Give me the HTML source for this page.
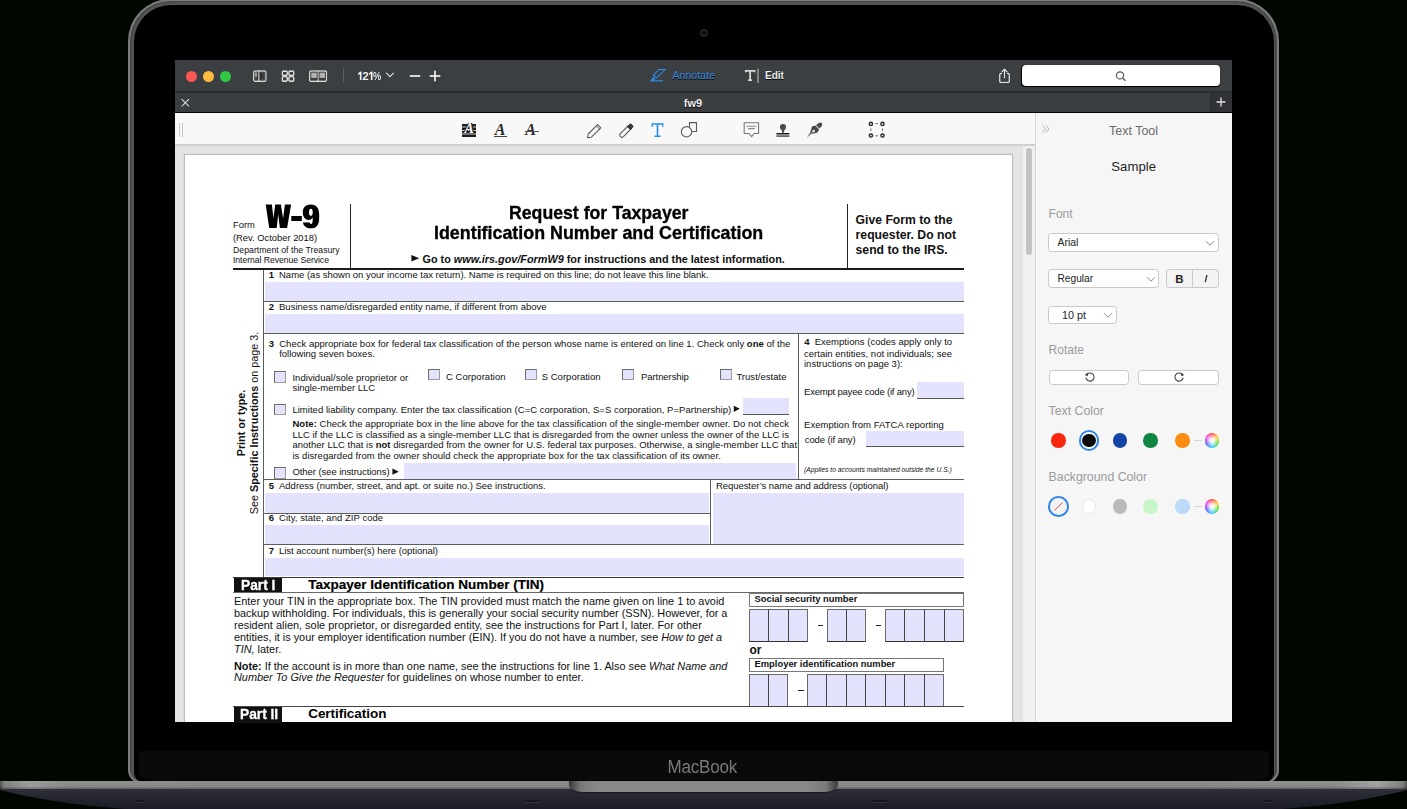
<!DOCTYPE html>
<html><head><meta charset="utf-8"><style>
*{margin:0;padding:0;box-sizing:border-box}
html,body{width:1407px;height:809px;overflow:hidden;background:#000700;font-family:"Liberation Sans",sans-serif}
.t{position:absolute;line-height:1;white-space:nowrap}
.r{position:absolute}
svg{position:absolute;overflow:visible}
</style></head><body>
<div class="r" style="left:128px;top:-1px;width:1151px;height:784px;border-radius:42px 42px 13px 13px;background:#7c7c7c"></div>
<div class="r" style="left:130.2px;top:1.2px;width:1146.6px;height:780px;border-radius:40px 40px 11px 11px;background:#4a4a4a"></div>
<div class="r" style="left:131.6px;top:2.6px;width:1143.8px;height:779px;border-radius:38.5px 38.5px 10px 10px;background:#545454"></div>
<div class="r" style="left:133.5px;top:4.5px;width:1140px;height:777px;border-radius:37px 37px 9px 9px;background:#000"></div>
<div class="r" style="left:699.5px;top:28.5px;width:8px;height:8px;border-radius:50%;background:radial-gradient(circle at 50% 50%,#050505 0,#111 30%,#2a2a2a 60%,#000 100%)"></div>
<div class="r" style="left:139px;top:751px;width:1130px;height:29px;background:#0a0a0a;border-radius:0 0 9px 9px;"></div>
<div class="t" style="left:667.50px;top:759.00px;font-size:17px;color:#7a7a7a;transform:scaleY(1.1);transform-origin:0 85%;letter-spacing:-0.2px;">MacBook</div>
<div class="r" style="left:0;top:781px;width:1407px;height:9px;background:linear-gradient(180deg,rgba(255,255,255,.06),rgba(0,0,0,0) 60%,rgba(0,0,0,.4)),linear-gradient(90deg,#4a4a4a 0,#7d7d7d 4px,#9a9a9a 30px,#8a8a8a 60px,#868686 200px,#868686 1207px,#8a8a8a 1340px,#a0a0a0 1377px,#7d7d7d 1403px,#4a4a4a 1407px)"></div>
<svg style="left:0;top:789px" width="1407" height="20" viewBox="0 0 1407 20"><defs><linearGradient id="bg1" x1="0" y1="0" x2="0" y2="1"><stop offset="0" stop-color="#2e2f37"/><stop offset="1" stop-color="#1a1b26"/></linearGradient></defs><path d="M0 0 H1407 V1 Q1352 15 1282 20 H125 Q55 15 0 1 Z" fill="url(#bg1)"/></svg>
<div class="r" style="left:134px;top:800px;width:12px;height:2px;border-radius:50%;background:#15161d;box-shadow:0 1px 0 rgba(120,120,140,.25)"></div>
<div class="r" style="left:524px;top:800px;width:18px;height:2px;border-radius:50%;background:#15161d;box-shadow:0 1px 0 rgba(120,120,140,.25)"></div>
<div class="r" style="left:870px;top:800px;width:18px;height:2px;border-radius:50%;background:#15161d;box-shadow:0 1px 0 rgba(120,120,140,.25)"></div>
<div class="r" style="left:1262px;top:800px;width:12px;height:2px;border-radius:50%;background:#15161d;box-shadow:0 1px 0 rgba(120,120,140,.25)"></div>
<div class="r" style="left:569px;top:781px;width:269px;height:11px;border-radius:0 0 14px 14px/0 0 8px 8px;background:linear-gradient(90deg,#3a3a3a,#7a7a7a 12px,#888 30px,#888 239px,#7a7a7a 257px,#3a3a3a);box-shadow:0 1px 1px rgba(0,0,0,.4)"></div>
<div class="r" style="left:175px;top:59.5px;width:1057px;height:662.5px;background:#e4e4e4;"></div>
<div class="r" style="left:175px;top:59.5px;width:1057px;height:31.5px;background:#3c3f42;"></div>
<div class="r" style="left:175px;top:91px;width:1057px;height:1.6px;background:#2b2d30;"></div>
<div class="r" style="left:175px;top:92.6px;width:1057px;height:19.4px;background:#3b3e41;"></div>
<div class="r" style="left:1211px;top:92.6px;width:21px;height:19.4px;background:#313336;"></div>
<div class="r" style="left:1210px;top:92.6px;width:1px;height:19.4px;background:#2c2e31;"></div>
<div class="r" style="left:175px;top:112px;width:1057px;height:1px;background:#050505;"></div>
<div class="r" style="left:185.5px;top:70.8px;width:11px;height:11px;border-radius:50%;background:#fc5753"></div>
<div class="r" style="left:202.5px;top:70.8px;width:11px;height:11px;border-radius:50%;background:#fdbc40"></div>
<div class="r" style="left:220.0px;top:70.8px;width:11px;height:11px;border-radius:50%;background:#33c748"></div>
<svg style="left:252px;top:69px;filter:drop-shadow(0 0.6px 0.3px #000) drop-shadow(0 0 0.5px #000);" width="16" height="14" viewBox="0 0 16 14"><rect x="1.75" y="1.95" width="12.2" height="10.3" rx="1.2" fill="none" stroke="#d9d9d6" stroke-width="1.4"/><line x1="6.9" y1="2" x2="6.9" y2="12" stroke="#d9d9d6" stroke-width="1.3"/><rect x="3" y="3.2" width="2.2" height="5" fill="#9a9a98"/><rect x="9" y="3.6" width="3.4" height="7" fill="none" stroke="#5e5e5c" stroke-width="0.8"/></svg>
<svg style="left:281px;top:69px;filter:drop-shadow(0 0.6px 0.3px #000) drop-shadow(0 0 0.5px #000);" width="15" height="14" viewBox="0 0 15 14"><rect x="1.3" y="2.1" width="4.9" height="4.3" rx="0.9" fill="none" stroke="#d9d9d6" stroke-width="1.6"/><rect x="1.3" y="7.8" width="4.9" height="4.3" rx="0.9" fill="none" stroke="#d9d9d6" stroke-width="1.6"/><rect x="7.9" y="2.1" width="4.9" height="4.3" rx="0.9" fill="none" stroke="#d9d9d6" stroke-width="1.6"/><rect x="7.9" y="7.8" width="4.9" height="4.3" rx="0.9" fill="none" stroke="#d9d9d6" stroke-width="1.6"/></svg>
<svg style="left:308px;top:69px;filter:drop-shadow(0 0.6px 0.3px #000) drop-shadow(0 0 0.5px #000);" width="20" height="14" viewBox="0 0 20 14"><rect x="1.7" y="1.95" width="16.8" height="10.3" rx="1" fill="none" stroke="#d9d9d6" stroke-width="1.4"/><line x1="10.1" y1="2" x2="10.1" y2="12" stroke="#d9d9d6" stroke-width="1.2"/><rect x="3.2" y="3.4" width="5.6" height="5.8" fill="#a8a8a6"/><rect x="11.4" y="3.4" width="5.6" height="5.8" fill="#a8a8a6"/><path d="M3.2 5.3 H8.8 M3.2 7.3 H8.8 M11.4 5.3 H17 M11.4 7.3 H17" stroke="#c8c8c6" stroke-width="0.6"/></svg>
<div class="r" style="left:343px;top:68px;width:1px;height:15px;background:#5b5e61;"></div>
<svg style="left:357px;top:71px;filter:drop-shadow(0 0 0.6px #000)" width="17" height="10" viewBox="0 0 17 10"><path d="M1.0 2.4 L3.0 0.4 H4.6 V8.9 H2.8 V2.9 L1.0 4.1 Z M12.0 2.4 L14.0 0.4 H15.6 V8.9 H13.8 V2.9 L12.0 4.1 Z" fill="#f4f4f4"/></svg>
<div class="t" style="left:362.30px;top:71.00px;font-size:11.5px;font-weight:700;color:#f4f4f4;text-shadow:0 0 1px #000;">2</div>
<div class="t" style="left:373.40px;top:71.00px;font-size:11.5px;font-weight:700;color:#f4f4f4;text-shadow:0 0 1px #000;transform:scaleX(0.81);transform-origin:0 0;">%</div>
<svg style="left:385px;top:71px;filter:drop-shadow(0 0.6px 0.3px #000) drop-shadow(0 0 0.5px #000);" width="10" height="8" viewBox="0 0 10 8"><polyline points="1.2,1.8 5,5.8 8.8,1.8" fill="none" stroke="#d9d9d6" stroke-width="1.3"/></svg>
<svg style="left:408px;top:69px;filter:drop-shadow(0 0.6px 0.3px #000) drop-shadow(0 0 0.5px #000);" width="34" height="14" viewBox="0 0 34 14"><line x1="1.6" y1="7" x2="12.4" y2="7" stroke="#f0f0f0" stroke-width="1.8"/><line x1="21.5" y1="7" x2="32.5" y2="7" stroke="#f0f0f0" stroke-width="1.8"/><line x1="27" y1="1.6" x2="27" y2="12.4" stroke="#f0f0f0" stroke-width="1.8"/></svg>
<svg style="left:645px;top:64px;filter:drop-shadow(0 0.5px 0.4px #000)" width="24" height="22" viewBox="0 0 24 22"><path d="M14.1 5.4 H20.4 L11.6 13.9 L8.4 11.2 Z" fill="none" stroke="#3b8ee0" stroke-width="1.3" stroke-linejoin="round"/><path d="M5.2 17.6 L8.1 12.6 L10.6 15.3 Z" fill="#3b8ee0"/><path d="M5.2 16.9 H18" stroke="#3b8ee0" stroke-width="1.5"/></svg>
<div class="t" style="left:672.40px;top:70.00px;font-size:10.5px;color:#3b8ee0;letter-spacing:0.1px;text-shadow:0 0.6px 0.5px #000;">Annotate</div>
<svg style="left:743px;top:67px;filter:drop-shadow(0 0.6px 0.3px #000) drop-shadow(0 0 0.5px #000);" width="18" height="17" viewBox="0 0 18 17"><path d="M2.6 5.6 V3.9 H11.6 V5.6 M7.1 3.9 V13.2 M5.1 13.2 H9.1" fill="none" stroke="#dcdcd8" stroke-width="1.8"/><line x1="15" y1="1.5" x2="15" y2="16" stroke="#dcdcd8" stroke-width="1.2"/></svg>
<div class="t" style="left:765.00px;top:71.00px;font-size:10px;font-weight:700;color:#ededed;text-shadow:0 0.7px 0.6px #000;">Edit</div>
<svg style="left:997px;top:67px;filter:drop-shadow(0 0.6px 0.3px #000) drop-shadow(0 0 0.5px #000);" width="15" height="18" viewBox="0 0 15 18"><path d="M5 6.5 H3.6 Q2.8 6.5 2.8 7.3 V14.6 Q2.8 15.4 3.6 15.4 H11.4 Q12.2 15.4 12.2 14.6 V7.3 Q12.2 6.5 11.4 6.5 H10" fill="none" stroke="#e6e6e6" stroke-width="1.4"/><line x1="7.5" y1="2.5" x2="7.5" y2="11.5" stroke="#e6e6e6" stroke-width="1.3"/><polyline points="4.6,5.2 7.5,2.2 10.4,5.2" fill="none" stroke="#e6e6e6" stroke-width="1.3"/></svg>
<div class="r" style="left:1022px;top:65px;width:198px;height:21px;border-radius:4px;background:#fff;box-shadow:-0.5px 0.8px 0.8px #000"></div>
<svg style="left:1114px;top:69px" width="14" height="14" viewBox="0 0 14 14"><circle cx="6" cy="6.4" r="3.6" fill="none" stroke="#555" stroke-width="1.2"/><line x1="8.6" y1="9" x2="11.4" y2="11.8" stroke="#555" stroke-width="1.3"/></svg>
<svg style="left:179px;top:97px;filter:drop-shadow(0 0.6px 0.3px #000) drop-shadow(0 0 0.5px #000);" width="13" height="12" viewBox="0 0 13 12"><path d="M2.5 2 L10.2 9.5 M10.2 2 L2.5 9.5" stroke="#cdcdcd" stroke-width="1.3"/></svg>
<div class="t" style="left:683.80px;top:98.00px;font-size:11px;font-weight:700;color:#f0f0f0;text-shadow:0 0.6px 0.7px #000;">fw9</div>
<svg style="left:1214px;top:95px" width="14" height="14" viewBox="0 0 14 14"><path d="M7 2.5 V11.5 M2.5 7 H11.5" stroke="#e0e0e0" stroke-width="1.3"/></svg>
<div class="r" style="left:175px;top:113px;width:860px;height:32px;background:#f8f8f8;"></div>
<div class="r" style="left:175px;top:144.4px;width:860px;height:1.4px;background:#d0d0d0;"></div>
<div class="r" style="left:179px;top:123px;width:1px;height:14px;background:#c8c8c8;"></div>
<div class="r" style="left:181.5px;top:123px;width:1px;height:14px;background:#c8c8c8;"></div>
<div class="r" style="left:462px;top:123.5px;width:13.5px;height:13px;background:#1e1e1e"></div>
<svg style="left:462px;top:123.5px" width="14" height="13" viewBox="0 0 14 13"><path d="M0 3.0 H14 M0 6.5 H14 M0 10 H14" stroke="#f8f8f8" stroke-width="0.8"/></svg>
<div class="t" style="left:464.60px;top:122.00px;font-size:14px;font-weight:700;color:#f8f8f8;font-family:'Liberation Serif',serif;font-style:italic;text-shadow:0.7px 0 0 #1e1e1e,-0.7px 0 0 #1e1e1e,1.2px 0 0 #1e1e1e,-1.2px 0 0 #1e1e1e;">A</div>
<div class="t" style="left:494.80px;top:122.00px;font-size:16px;font-weight:700;color:#2a2a2a;font-family:'Liberation Serif',serif;font-style:italic;">A</div>
<div class="r" style="left:494px;top:136.2px;width:12.5px;height:1.1px;background:#444;"></div>
<div class="t" style="left:525.20px;top:122.00px;font-size:16px;font-weight:700;color:#2a2a2a;font-family:'Liberation Serif',serif;font-style:italic;">A</div>
<div class="r" style="left:524.8px;top:131.3px;width:14px;height:1.1px;background:#555;"></div>
<svg style="left:585px;top:121px" width="19" height="18" viewBox="0 0 19 18"><path d="M3.2 13 L12.6 3.6 L15.8 6.8 L6.4 16.2 L2.6 16.6 Z" fill="none" stroke="#5a5a5a" stroke-width="1.1" stroke-linejoin="round"/><line x1="11.4" y1="4.8" x2="14.6" y2="8" stroke="#5a5a5a" stroke-width="1"/></svg>
<svg style="left:617px;top:121px" width="18" height="18" viewBox="0 0 18 18"><path d="M3.4 12.6 L11 5 L14 8 L6.4 15.6 Q5 17 3.6 15.6 L3.4 15.4 Q2 14 3.4 12.6 Z" fill="none" stroke="#5a5a5a" stroke-width="1.1"/><path d="M10.4 5.6 L12.2 3.8 Q13.6 2.4 15 3.8 L15.2 4 Q16.6 5.4 15.2 6.8 L13.4 8.6 Z" fill="#3a3a3a" stroke="#2a2a2a" stroke-width="1"/></svg>
<svg style="left:650px;top:122px" width="15" height="16" viewBox="0 0 15 16"><path d="M1.8 2 H13.2 M7.5 2 V14 M4.4 14.3 H10.6" fill="none" stroke="#1f8ef3" stroke-width="1.6"/><path d="M2.2 1.4 V5 M12.8 1.4 V5" stroke="#1f8ef3" stroke-width="1.2"/></svg>
<svg style="left:680px;top:121px" width="18" height="18" viewBox="0 0 18 18"><path d="M9.5 6 V1.6 H16.5 V10.5 H12" fill="none" stroke="#5a5a5a" stroke-width="1.1"/><circle cx="6.5" cy="10.8" r="5.2" fill="none" stroke="#5a5a5a" stroke-width="1.1"/></svg>
<svg style="left:742px;top:121px" width="19" height="18" viewBox="0 0 19 18"><path d="M2.2 1.7 H16.6 V12.5 H12.2 L9.6 15.6 L7 12.5 H2.2 Z" fill="none" stroke="#777" stroke-width="1.1" stroke-linejoin="round"/><path d="M4.4 5.2 H14.4 M6 7.6 H12.6" stroke="#888" stroke-width="1.1"/></svg>
<svg style="left:775px;top:121px" width="16" height="18" viewBox="0 0 16 18"><circle cx="8" cy="6" r="3.1" fill="#4a4a4a"/><path d="M6.4 8 L7.2 11.8 H8.8 L9.6 8 Z" fill="#4a4a4a"/><rect x="1.4" y="12" width="13" height="1.5" fill="#1a1a1a"/><rect x="1.4" y="14.2" width="13" height="1.8" fill="#6a6a6a"/></svg>
<svg style="left:805px;top:121px" width="19" height="18" viewBox="0 0 19 18"><path d="M11 4.2 L13.6 2 Q15.6 0.8 16.8 2 Q18 3.2 16.6 5.2 L14.4 7.6 Z" fill="#4a4a4a"/><path d="M10.2 4.6 L14.2 8.6 L12.4 11.6 L6 13.2 L1.8 17 L5.2 11.4 L7 5.6 Z" fill="#4a4a4a"/><circle cx="8.6" cy="10" r="1.2" fill="#f6f6f6"/><line x1="2" y1="16.8" x2="8.2" y2="10.5" stroke="#f6f6f6" stroke-width="0.6"/></svg>
<svg style="left:868px;top:121px" width="18" height="18" viewBox="0 0 18 18"><g fill="#f8f8f8" stroke="#2e2e2e" stroke-width="1.5"><circle cx="2.9" cy="2.9" r="1.6"/><circle cx="14.5" cy="2.9" r="1.6"/><circle cx="2.9" cy="14.5" r="1.6"/><circle cx="14.5" cy="14.5" r="1.6"/></g><path d="M7.5 2.6 H9.9 M7.5 14.8 H9.9 M2.9 7.5 V9.9 M14.5 7.5 V9.9" stroke="#666" stroke-width="1"/></svg>
<div class="r" style="left:1023px;top:146px;width:12px;height:576px;background:#f1f1f1;"></div>
<div class="r" style="left:1025.5px;top:148px;width:6.5px;height:107px;background:#c2c2c2;border-radius:3.5px;"></div>
<div class="r" style="left:1035px;top:113px;width:197px;height:609px;background:#f6f6f6;"></div>
<div class="r" style="left:1035px;top:113px;width:1px;height:609px;background:#d4d4d4;"></div>
<div class="r" style="left:184px;top:154.2px;width:829px;height:567.8px;background:#fff;border:1px solid #bdbdbd;border-bottom:0;box-shadow:0 0 1.5px rgba(0,0,0,.12);"></div>
<div class="t" style="left:233.00px;top:220.00px;font-size:9.4px;color:#111;">Form</div>
<svg style="left:0;top:0" width="1" height="1"><path fill="#000" fill-rule="evenodd" d="M265.7 204.5 L271.9 204.5 L273.4 218.6 L275.2 204.5 L280.9 204.5 L283.1 218.6 L284.9 204.5 L291.1 204.5 L287.1 227.9 L279.9 227.9 L278.2 214.6 L276.7 227.9 L269.2 227.9 Z M291.3 215.9 H301.8 V220.9 H291.3 Z M311 204.5 C316.5 204.5 319.2 208 319.2 215 L319.2 218 C319.2 225 316.5 228.3 311 228.3 C306 228.3 303.3 225.5 303 222.4 L309.8 222.4 C310 223.5 310.5 224 311 224 C312.2 224 312.7 222.5 312.7 219.5 L312.7 217.5 C311.8 219.2 310 220 308.6 220 C304.8 220 302.8 216.5 302.8 212.3 C302.8 207.5 305.8 204.5 311 204.5 Z M311 208.7 C309.6 208.7 309 210 309 212.3 C309 214.6 309.6 215.9 310.9 215.9 C312.2 215.9 312.7 214.6 312.7 212.3 C312.7 210 312.2 208.7 311 208.7 Z"/></svg>
<div class="t" style="left:233.00px;top:233.00px;font-size:9.4px;color:#111;letter-spacing:-0.009px;">(Rev. October 2018)</div>
<div class="t" style="left:233.00px;top:246.00px;font-size:8.7px;color:#111;letter-spacing:0.036px;">Department of the Treasury</div>
<div class="t" style="left:233.00px;top:256.00px;font-size:8.7px;color:#111;letter-spacing:-0.069px;">Internal Revenue Service</div>
<div class="r" style="left:349.5px;top:203.5px;width:1.5px;height:64.5px;background:#222;"></div>
<div class="r" style="left:846.5px;top:203.5px;width:1.5px;height:64.5px;background:#222;"></div>
<div class="t" style="left:508.80px;top:204.00px;font-size:18.5px;transform:scaleX(0.9558);transform-origin:0 0;-webkit-text-stroke:0.35px #000;"><b>Request for Taxpayer</b></div>
<div class="t" style="left:433.60px;top:224.00px;font-size:18.5px;transform:scaleX(0.9647);transform-origin:0 0;-webkit-text-stroke:0.35px #000;"><b>Identification Number and Certification</b></div>
<svg style="left:0;top:0" width="1" height="1"><path d="M411.4 255 L419.2 258.2 L411.4 261.4 Z M733.8 405.7 L739.8 408.8 L733.8 411.9 Z M392.4 468.6 L398.8 471.7 L392.4 474.8 Z" fill="#111"/></svg>
<div class="t" style="left:422.50px;top:254.00px;font-size:10.85px;color:#111;letter-spacing:0.000px;"><b>Go to </b><b><i>www.irs.gov/FormW9</i></b><b> for instructions and the latest information.</b></div>
<div class="t" style="left:855.60px;top:214.00px;font-size:12.2px;color:#111;"><b>Give Form to the</b></div>
<div class="t" style="left:855.60px;top:229.00px;font-size:12.2px;color:#111;letter-spacing:0.011px;"><b>requester. Do not</b></div>
<div class="t" style="left:855.60px;top:244.00px;font-size:12.2px;color:#111;"><b>send to the IRS.</b></div>
<div class="r" style="left:233px;top:268px;width:731px;height:2px;background:#1a1a1a;"></div>
<div class="t" style="left:240.9px;top:422.6px;font-size:10.8px;font-weight:700;color:#111;transform:translate(-50%,-50%) rotate(-90deg);">Print or type.</div>
<div class="t" style="left:254.3px;top:423.2px;font-size:10.8px;color:#111;transform:translate(-50%,-50%) rotate(-90deg);">See <b>Specific Instructions</b> on page 3.</div>
<div class="r" style="left:263px;top:270px;width:1px;height:307px;background:#5c5c5c;"></div>
<div class="t" style="left:268.80px;top:270.00px;font-size:9.5px;color:#111;"><b>1</b></div>
<div class="t" style="left:279.00px;top:270.00px;font-size:9.5px;color:#111;letter-spacing:-0.006px;">Name (as shown on your income tax return). Name is required on this line; do not leave this line blank.</div>
<div class="r" style="left:265px;top:282px;width:699px;height:19px;background:#e3e3fd;"></div>
<div class="r" style="left:263px;top:301px;width:701px;height:1px;background:#5c5c5c;"></div>
<div class="t" style="left:268.80px;top:302.00px;font-size:9.5px;color:#111;"><b>2</b></div>
<div class="t" style="left:279.00px;top:302.00px;font-size:9.5px;color:#111;letter-spacing:0.018px;">Business name/disregarded entity name, if different from above</div>
<div class="r" style="left:265px;top:314.4px;width:699px;height:18.6px;background:#e3e3fd;"></div>
<div class="r" style="left:263px;top:333px;width:701px;height:1px;background:#5c5c5c;"></div>
<div class="t" style="left:268.80px;top:339.00px;font-size:9.5px;color:#111;"><b>3</b></div>
<div class="t" style="left:279.20px;top:339.00px;font-size:9.5px;color:#111;letter-spacing:0.022px;">Check appropriate box for federal tax classification of the person whose name is entered on line 1. Check only <b>one</b> of the</div>
<div class="t" style="left:279.20px;top:349.00px;font-size:9.5px;color:#111;">following seven boxes.</div>
<div class="r" style="left:274px;top:371px;width:11.5px;height:11.5px;background:#e3e3fd;border:1px solid #6a6a6a;border-right-color:#9a9a9a;border-bottom-color:#9a9a9a;"></div>
<div class="t" style="left:292.40px;top:373.00px;font-size:9.5px;color:#111;letter-spacing:0.043px;">Individual/sole proprietor or</div>
<div class="t" style="left:292.40px;top:383.00px;font-size:9.5px;color:#111;letter-spacing:-0.012px;">single-member LLC</div>
<div class="r" style="left:428px;top:368.8px;width:11.5px;height:11.5px;background:#e3e3fd;border:1px solid #6a6a6a;border-right-color:#9a9a9a;border-bottom-color:#9a9a9a;"></div>
<div class="t" style="left:446.00px;top:372.00px;font-size:9.5px;color:#111;letter-spacing:0.038px;">C Corporation</div>
<div class="r" style="left:525.4px;top:368.8px;width:11.5px;height:11.5px;background:#e3e3fd;border:1px solid #6a6a6a;border-right-color:#9a9a9a;border-bottom-color:#9a9a9a;"></div>
<div class="t" style="left:541.70px;top:372.00px;font-size:9.5px;color:#111;letter-spacing:0.024px;">S Corporation</div>
<div class="r" style="left:622.3px;top:368.8px;width:11.5px;height:11.5px;background:#e3e3fd;border:1px solid #6a6a6a;border-right-color:#9a9a9a;border-bottom-color:#9a9a9a;"></div>
<div class="t" style="left:641.00px;top:372.00px;font-size:9.5px;color:#111;letter-spacing:-0.068px;">Partnership</div>
<div class="r" style="left:720px;top:368.8px;width:11.5px;height:11.5px;background:#e3e3fd;border:1px solid #6a6a6a;border-right-color:#9a9a9a;border-bottom-color:#9a9a9a;"></div>
<div class="t" style="left:736.40px;top:372.00px;font-size:9.5px;color:#111;letter-spacing:0.027px;">Trust/estate</div>
<div class="r" style="left:274px;top:403.6px;width:11.5px;height:11.5px;background:#e3e3fd;border:1px solid #6a6a6a;border-right-color:#9a9a9a;border-bottom-color:#9a9a9a;"></div>
<div class="t" style="left:292.40px;top:405.00px;font-size:9.5px;color:#111;letter-spacing:0.029px;">Limited liability company. Enter the tax classification (C=C corporation, S=S corporation, P=Partnership)</div>
<div class="r" style="left:743px;top:398px;width:46px;height:16px;background:#e3e3fd;"></div>
<div class="r" style="left:743px;top:414px;width:46px;height:1px;background:#555;"></div>
<div class="t" style="left:292.40px;top:419.00px;font-size:9.5px;color:#111;letter-spacing:0.038px;"><b>Note:</b> Check the appropriate box in the line above for the tax classification of the single-member owner.  Do not check</div>
<div class="t" style="left:292.40px;top:430.00px;font-size:9.5px;color:#111;letter-spacing:0.011px;">LLC if the LLC is classified as a single-member LLC that is disregarded from the owner unless the owner of the LLC is</div>
<div class="t" style="left:292.40px;top:440.00px;font-size:9.5px;color:#111;letter-spacing:0.017px;">another LLC that is <b>not</b> disregarded from the owner for U.S. federal tax purposes. Otherwise, a single-member LLC that</div>
<div class="t" style="left:292.40px;top:451.00px;font-size:9.5px;color:#111;letter-spacing:0.053px;">is disregarded from the owner should check the appropriate box for the tax classification of its owner.</div>
<div class="r" style="left:274px;top:467px;width:11.5px;height:11.5px;background:#e3e3fd;border:1px solid #6a6a6a;border-right-color:#9a9a9a;border-bottom-color:#9a9a9a;"></div>
<div class="t" style="left:292.40px;top:467.00px;font-size:9.5px;color:#111;letter-spacing:-0.067px;">Other (see instructions)</div>
<div class="r" style="left:404px;top:463px;width:392px;height:16px;background:#e3e3fd;"></div>
<div class="r" style="left:798px;top:333px;width:1px;height:146px;background:#5c5c5c;"></div>
<div class="t" style="left:804.20px;top:337.00px;font-size:9.5px;color:#111;"><b>4</b></div>
<div class="t" style="left:814.70px;top:337.00px;font-size:9.5px;color:#111;letter-spacing:0.021px;">Exemptions (codes apply only to</div>
<div class="t" style="left:804.00px;top:349.00px;font-size:9.5px;color:#111;letter-spacing:0.018px;">certain entities, not individuals; see</div>
<div class="t" style="left:804.00px;top:359.00px;font-size:9.5px;color:#111;letter-spacing:-0.002px;">instructions on page 3):</div>
<div class="t" style="left:804.00px;top:387.00px;font-size:9.5px;color:#111;letter-spacing:-0.202px;">Exempt payee code (if any)</div>
<div class="r" style="left:916.5px;top:382.4px;width:47.5px;height:15.8px;background:#e3e3fd;"></div>
<div class="r" style="left:916.5px;top:397.5px;width:47.5px;height:1px;background:#555;"></div>
<div class="t" style="left:804.00px;top:420.00px;font-size:9.5px;color:#111;letter-spacing:0.039px;">Exemption from FATCA reporting</div>
<div class="t" style="left:804.80px;top:435.00px;font-size:9.5px;color:#111;letter-spacing:-0.123px;">code (if any)</div>
<div class="r" style="left:866px;top:430.8px;width:98px;height:16.2px;background:#e3e3fd;"></div>
<div class="r" style="left:866px;top:446.3px;width:98px;height:1px;background:#555;"></div>
<div class="t" style="left:804.00px;top:467.00px;font-size:6.76px;color:#111;letter-spacing:-0.001px;"><i>(Applies to accounts maintained outside the U.S.)</i></div>
<div class="r" style="left:263px;top:479px;width:701px;height:1px;background:#5c5c5c;"></div>
<div class="t" style="left:268.80px;top:481.00px;font-size:9.5px;color:#111;"><b>5</b></div>
<div class="t" style="left:279.00px;top:481.00px;font-size:9.5px;color:#111;letter-spacing:0.001px;">Address (number, street, and apt. or suite no.) See instructions.</div>
<div class="r" style="left:265px;top:493px;width:443.5px;height:19.5px;background:#e3e3fd;"></div>
<div class="r" style="left:263px;top:512.5px;width:447.5px;height:1px;background:#5c5c5c;"></div>
<div class="t" style="left:268.80px;top:513.00px;font-size:9.5px;color:#111;"><b>6</b></div>
<div class="t" style="left:279.00px;top:513.00px;font-size:9.5px;color:#111;letter-spacing:0.040px;">City, state, and ZIP code</div>
<div class="r" style="left:265px;top:525px;width:443.5px;height:19.2px;background:#e3e3fd;"></div>
<div class="r" style="left:710px;top:479px;width:1px;height:65.5px;background:#5c5c5c;"></div>
<div class="t" style="left:715.90px;top:481.00px;font-size:9.5px;color:#111;letter-spacing:-0.049px;">Requester’s name and address (optional)</div>
<div class="r" style="left:712.5px;top:493px;width:251.5px;height:51.2px;background:#e3e3fd;"></div>
<div class="r" style="left:263px;top:544.2px;width:701px;height:1px;background:#5c5c5c;"></div>
<div class="t" style="left:268.80px;top:546.00px;font-size:9.5px;color:#111;"><b>7</b></div>
<div class="t" style="left:279.00px;top:546.00px;font-size:9.5px;color:#111;letter-spacing:-0.044px;">List account number(s) here (optional)</div>
<div class="r" style="left:265px;top:557.6px;width:699px;height:18.9px;background:#e3e3fd;"></div>
<div class="r" style="left:233px;top:576.5px;width:731px;height:1.3px;background:#3a3a3a;"></div>
<div class="r" style="left:234px;top:577.5px;width:48px;height:15px;background:#111;"></div>
<div class="t" style="left:240.70px;top:578.00px;font-size:14.4px;color:#fff;transform:scaleX(0.9552);transform-origin:0 0;-webkit-text-stroke:0.3px #fff;"><b>Part I</b></div>
<div class="t" style="left:308.20px;top:578.00px;font-size:13.5px;letter-spacing:0.015px;-webkit-text-stroke:0.2px #000;"><b>Taxpayer Identification Number (TIN)</b></div>
<div class="r" style="left:233px;top:592px;width:731px;height:1px;background:#666;"></div>
<div class="t" style="left:234.00px;top:596.00px;font-size:10.9px;color:#111;letter-spacing:-0.006px;">Enter your TIN in the appropriate box. The TIN provided must match the name given on line 1 to avoid</div>
<div class="t" style="left:234.00px;top:608.00px;font-size:10.9px;color:#111;letter-spacing:-0.011px;">backup withholding. For individuals, this is generally your social security number (SSN). However, for a</div>
<div class="t" style="left:234.00px;top:620.00px;font-size:10.9px;color:#111;letter-spacing:0.018px;">resident alien, sole proprietor, or disregarded entity, see the instructions for Part I, later. For other</div>
<div class="t" style="left:234.00px;top:632.00px;font-size:10.9px;color:#111;letter-spacing:-0.015px;">entities, it is your employer identification number (EIN). If you do not have a number, see <i>How to get a</i></div>
<div class="t" style="left:234.00px;top:644.00px;font-size:10.9px;color:#111;"><i>TIN,</i> later.</div>
<div class="t" style="left:234.00px;top:661.00px;font-size:10.9px;color:#111;letter-spacing:-0.024px;"><b>Note:</b> If the account is in more than one name, see the instructions for line 1. Also see <i>What Name and</i></div>
<div class="t" style="left:234.00px;top:672.00px;font-size:10.9px;color:#111;letter-spacing:-0.009px;"><i>Number To Give the Requester</i> for guidelines on whose number to enter.</div>
<div class="r" style="left:749px;top:593px;width:215px;height:14px;background:#fff;border:1px solid #777;"></div>
<div class="t" style="left:754.50px;top:594.00px;font-size:9.4px;color:#111;letter-spacing:-0.011px;"><b>Social security number</b></div>
<div class="r" style="left:749px;top:609.4px;width:58.800000000000004px;height:32.4px;background:#e3e3fd;border:1px solid #6a6a6a;border-bottom-color:#333;"></div>
<div class="r" style="left:768.1px;top:609.4px;width:1px;height:32.4px;background:#444;"></div>
<div class="r" style="left:787.7px;top:609.4px;width:1px;height:32.4px;background:#444;"></div>
<div class="r" style="left:817.6px;top:625px;width:5.6px;height:1.4px;background:#222;"></div>
<div class="r" style="left:827px;top:609.4px;width:39.2px;height:32.4px;background:#e3e3fd;border:1px solid #6a6a6a;border-bottom-color:#333;"></div>
<div class="r" style="left:846.1px;top:609.4px;width:1px;height:32.4px;background:#444;"></div>
<div class="r" style="left:875.6px;top:625px;width:5.6px;height:1.4px;background:#222;"></div>
<div class="r" style="left:885px;top:609.4px;width:78.8px;height:32.4px;background:#e3e3fd;border:1px solid #6a6a6a;border-bottom-color:#333;"></div>
<div class="r" style="left:904.2px;top:609.4px;width:1px;height:32.4px;background:#444;"></div>
<div class="r" style="left:923.9px;top:609.4px;width:1px;height:32.4px;background:#444;"></div>
<div class="r" style="left:943.6px;top:609.4px;width:1px;height:32.4px;background:#444;"></div>
<div class="t" style="left:749.40px;top:644.00px;font-size:12px;color:#111;"><b>or</b></div>
<div class="r" style="left:749px;top:658px;width:195px;height:14px;background:#fff;border:1px solid #777;"></div>
<div class="t" style="left:754.50px;top:659.00px;font-size:9.4px;color:#111;letter-spacing:0.003px;"><b>Employer identification number</b></div>
<div class="r" style="left:749px;top:674px;width:39.2px;height:32.5px;background:#e3e3fd;border:1px solid #6a6a6a;border-bottom-color:#333;"></div>
<div class="r" style="left:768.1px;top:674px;width:1px;height:32.5px;background:#444;"></div>
<div class="r" style="left:798px;top:690px;width:5.6px;height:1.2px;background:#222;"></div>
<div class="r" style="left:807.4px;top:674px;width:136.5px;height:32.5px;background:#e3e3fd;border:1px solid #6a6a6a;border-bottom-color:#333;"></div>
<div class="r" style="left:826.4px;top:674px;width:1px;height:32.5px;background:#444;"></div>
<div class="r" style="left:845.9px;top:674px;width:1px;height:32.5px;background:#444;"></div>
<div class="r" style="left:865.4px;top:674px;width:1px;height:32.5px;background:#444;"></div>
<div class="r" style="left:884.9px;top:674px;width:1px;height:32.5px;background:#444;"></div>
<div class="r" style="left:904.4px;top:674px;width:1px;height:32.5px;background:#444;"></div>
<div class="r" style="left:923.9px;top:674px;width:1px;height:32.5px;background:#444;"></div>
<div class="r" style="left:749px;top:706px;width:215px;height:1px;background:#444;"></div>
<div class="r" style="left:233px;top:706.2px;width:731px;height:1.2px;background:#444;"></div>
<div class="r" style="left:234px;top:707px;width:48px;height:16px;background:#111;"></div>
<div class="t" style="left:239.50px;top:707.00px;font-size:14.4px;color:#fff;transform:scaleX(0.9546);transform-origin:0 0;-webkit-text-stroke:0.3px #fff;"><b>Part II</b></div>
<div class="t" style="left:308.20px;top:707.00px;font-size:13.5px;letter-spacing:-0.047px;"><b>Certification</b></div>
<svg style="left:1041px;top:124px" width="10" height="10" viewBox="0 0 10 10"><path d="M1.5 1.5 L4.5 5 L1.5 8.5 M5 1.5 L8 5 L5 8.5" fill="none" stroke="#ababab" stroke-width="0.9"/></svg>
<div class="t" style="left:1109.00px;top:125.00px;font-size:12.5px;color:#6b6b6b;">Text Tool</div>
<div class="t" style="left:1111.30px;top:160.00px;font-size:13.2px;color:#1e1e1e;">Sample</div>
<div class="t" style="left:1048.60px;top:208.00px;font-size:12px;color:#9b9b9b;">Font</div>
<div class="r" style="left:1048.4px;top:233.4px;width:170.4px;height:18.2px;background:#fff;border:1px solid #c9c9c9;border-radius:3.5px;"></div>
<div class="t" style="left:1057.50px;top:238.00px;font-size:10.4px;color:#222;">Arial</div>
<svg style="left:1205.3px;top:239.5px" width="10" height="7" viewBox="0 0 10 7"><polyline points="1,1.2 5,5.2 9,1.2" fill="none" stroke="#8a8a8a" stroke-width="1"/></svg>
<div class="r" style="left:1048.4px;top:269.4px;width:110.6px;height:18.2px;background:#fff;border:1px solid #c9c9c9;border-radius:3.5px;"></div>
<div class="t" style="left:1057.50px;top:274.00px;font-size:10.2px;color:#222;">Regular</div>
<svg style="left:1145.6px;top:275.5px" width="10" height="7" viewBox="0 0 10 7"><polyline points="1,1.2 5,5.2 9,1.2" fill="none" stroke="#8a8a8a" stroke-width="1"/></svg>
<div class="r" style="left:1166.3px;top:269.4px;width:52.3px;height:18.2px;background:#f3f3f3;border:1px solid #c9c9c9;border-radius:3.5px;"></div>
<div class="r" style="left:1192.2px;top:270.4px;width:1px;height:16.2px;background:#c9c9c9;"></div>
<div class="t" style="left:1175.30px;top:274.00px;font-size:11.5px;font-weight:700;color:#222;">B</div>
<svg style="left:1200px;top:272px" width="12" height="12" viewBox="0 0 12 12"><line x1="6.9" y1="3.0" x2="5.2" y2="10.2" stroke="#333" stroke-width="1.3"/></svg>
<div class="r" style="left:1048.4px;top:305.5px;width:68.2px;height:18.2px;background:#fff;border:1px solid #c9c9c9;border-radius:3.5px;"></div>
<div class="t" style="left:1062.00px;top:310.00px;font-size:10.8px;color:#222;">10 pt</div>
<svg style="left:1103.2px;top:312px" width="10" height="7" viewBox="0 0 10 7"><polyline points="1,1.2 5,5.2 9,1.2" fill="none" stroke="#8a8a8a" stroke-width="1"/></svg>
<div class="t" style="left:1048.60px;top:344.00px;font-size:12px;color:#9b9b9b;">Rotate</div>
<div class="r" style="left:1048.6px;top:369.5px;width:80.8px;height:15.4px;background:#fff;border:1px solid #c9c9c9;border-radius:3.5px;"></div>
<div class="r" style="left:1138.3px;top:369.5px;width:80.5px;height:15.4px;background:#fff;border:1px solid #c9c9c9;border-radius:3.5px;"></div>
<svg style="left:1083px;top:370px" width="14" height="14" viewBox="0 0 14 14"><path d="M4 4.2 A4.1 4.1 0 1 1 2.9 7.6" fill="none" stroke="#444" stroke-width="1.1"/><path d="M1.6 4.9 L4.9 2.6 L4.9 6.2 Z" fill="#444"/></svg>
<svg style="left:1172px;top:370px" width="14" height="14" viewBox="0 0 14 14"><path d="M10 4.2 A4.1 4.1 0 1 0 11.1 7.6" fill="none" stroke="#444" stroke-width="1.1"/><path d="M12.4 4.9 L9.1 2.6 L9.1 6.2 Z" fill="#444"/></svg>
<div class="t" style="left:1048.60px;top:405.00px;font-size:12.3px;color:#9b9b9b;">Text Color</div>
<div class="t" style="left:1048.60px;top:471.00px;font-size:12.3px;color:#9b9b9b;">Background Color</div>
<div class="r" style="left:1051.25px;top:433.35px;width:14.5px;height:14.5px;border-radius:50%;background:#f7260d;"></div>
<div class="r" style="left:1078.70px;top:430.30px;width:20.6px;height:20.6px;border-radius:50%;background:#fff;border:2px solid #2f86e8;"></div>
<div class="r" style="left:1082.20px;top:433.80px;width:13.6px;height:13.6px;border-radius:50%;background:#0a0a0a;"></div>
<div class="r" style="left:1112.75px;top:433.35px;width:14.5px;height:14.5px;border-radius:50%;background:#1546a6;"></div>
<div class="r" style="left:1143.45px;top:433.35px;width:14.5px;height:14.5px;border-radius:50%;background:#0f8741;"></div>
<div class="r" style="left:1175.15px;top:433.35px;width:14.5px;height:14.5px;border-radius:50%;background:#fd8c12;"></div>
<div class="r" style="left:1193.5px;top:440.1px;width:8.5px;height:1px;background:#d8d8d8;"></div>
<div class="r" style="left:1204.95px;top:433.35px;width:14.5px;height:14.5px;border-radius:50%;background:conic-gradient(from 0deg,#f44 ,#fc3,#4d4,#3cf,#55f,#e4e,#f44);"></div>
<div class="r" style="left:1204.95px;top:433.35px;width:14.5px;height:14.5px;border-radius:50%;background:radial-gradient(#fff 0,rgba(255,255,255,.8) 25%,rgba(255,255,255,0) 70%);"></div>
<div class="r" style="left:1048.20px;top:496.10px;width:20.6px;height:20.6px;border-radius:50%;background:#f3f3f3;border:2px solid #2f86e8;"></div>
<svg style="left:1052px;top:499.9px" width="13" height="13" viewBox="0 0 13 13"><line x1="2.5" y1="10.5" x2="10.5" y2="2.5" stroke="#f05050" stroke-width="1"/></svg>
<div class="r" style="left:1081.75px;top:499.15px;width:14.5px;height:14.5px;border-radius:50%;background:#fff;border:1px solid #e6e6e6;"></div>
<div class="r" style="left:1112.75px;top:499.15px;width:14.5px;height:14.5px;border-radius:50%;background:#b9b9b9;"></div>
<div class="r" style="left:1143.45px;top:499.15px;width:14.5px;height:14.5px;border-radius:50%;background:#c9f6c9;"></div>
<div class="r" style="left:1175.15px;top:499.15px;width:14.5px;height:14.5px;border-radius:50%;background:#bcd9f8;"></div>
<div class="r" style="left:1193.5px;top:505.9px;width:8.5px;height:1px;background:#d8d8d8;"></div>
<div class="r" style="left:1204.95px;top:499.15px;width:14.5px;height:14.5px;border-radius:50%;background:conic-gradient(from 0deg,#f44 ,#fc3,#4d4,#3cf,#55f,#e4e,#f44);"></div>
<div class="r" style="left:1204.95px;top:499.15px;width:14.5px;height:14.5px;border-radius:50%;background:radial-gradient(#fff 0,rgba(255,255,255,.8) 25%,rgba(255,255,255,0) 70%);"></div>
</body></html>
